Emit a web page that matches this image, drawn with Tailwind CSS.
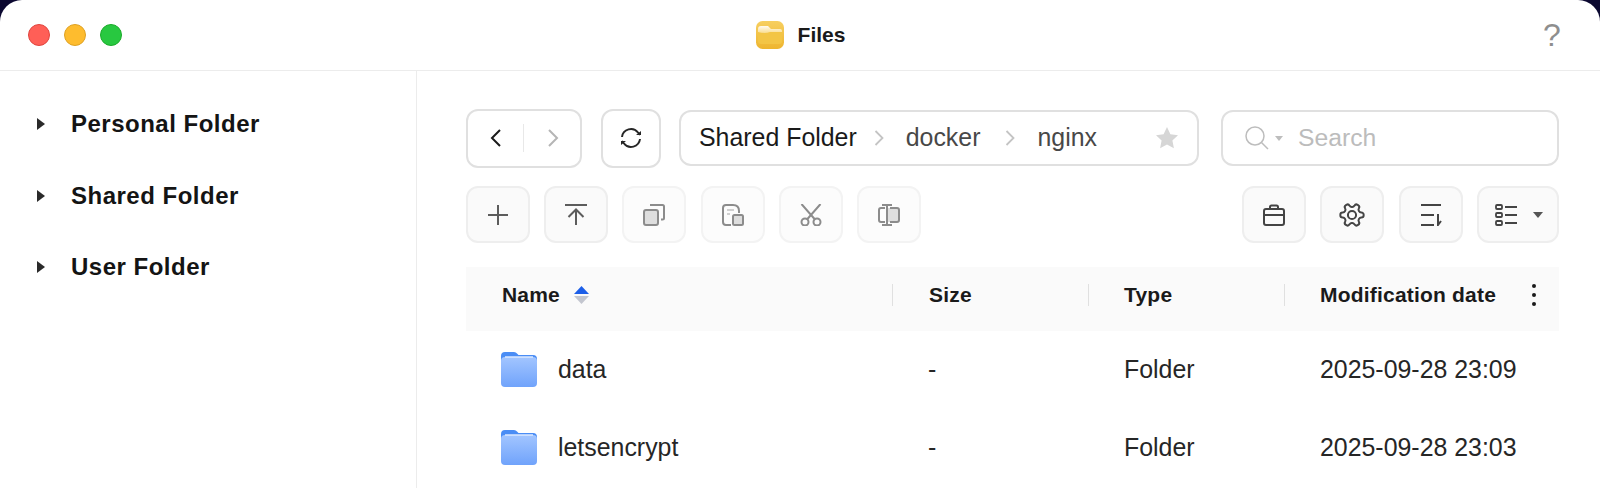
<!DOCTYPE html>
<html lang="en">
<head>
<meta charset="utf-8">
<title>Files</title>
<script src="https://cdn.jsdelivr.net/npm/@tailwindcss/browser@4"></script>
</head>
<body class="bg-[#0b0830] overflow-hidden font-['Liberation_Sans',Arial,sans-serif]">
<div class="w-[1600px] h-[488px] bg-white rounded-t-[22px] flex flex-col overflow-hidden">
  <!-- title bar -->
  <header class="h-[71px] shrink-0 border-b border-[#ececec] grid grid-cols-[1fr_auto_1fr] items-center pl-[28px] pr-[38px]">
    <div class="flex items-center gap-[14px]">
      <span class="w-[22px] h-[22px] rounded-full bg-[#ff5f57] border border-[#e0443e]"></span>
      <span class="w-[22px] h-[22px] rounded-full bg-[#febc2e] border border-[#dea123]"></span>
      <span class="w-[22px] h-[22px] rounded-full bg-[#28c840] border border-[#1aab29]"></span>
    </div>
    <div class="flex items-center gap-[13px] pl-[10px]">
      <svg width="30" height="30" viewBox="0 0 30 30">
        <defs>
          <linearGradient id="y" x1="0" y1="0" x2="0" y2="1"><stop offset="0" stop-color="#f7cf60"/><stop offset="1" stop-color="#eeb52f"/></linearGradient>
          <linearGradient id="p" x1="0" y1="0" x2="0" y2="1"><stop offset="0" stop-color="#fffaf0"/><stop offset="1" stop-color="#f8d676"/></linearGradient>
        </defs>
        <rect x="1" y="1" width="28" height="28" rx="6.500" fill="url(#y)"/>
        <path d="M3 9q0-3 3-3h7l3 3h9q2 0 2 2v4H3z" fill="url(#p)"/>
        <path d="M3 12q7 2 12 0h12v9q0 3-3 3H6q-3 0-3-3z" fill="#f3c545"/>
      </svg>
      <span class="text-[21px] font-bold text-[#1a1a1a]">Files</span>
    </div>
    <span class="justify-self-end text-[32px] leading-none text-[#8e8e8e] w-[24px] text-center -mr-[2px]">?</span>
  </header>

  <div class="flex-1 flex min-h-0">
    <!-- sidebar -->
    <aside class="w-[417px] shrink-0 border-r border-[#ececec] pt-[35px] pl-[37px]">
      <div class="h-[36px] mb-[35.5px] flex items-center gap-[26px]">
        <svg width="8" height="12" viewBox="0 0 8 12"><path d="M0 0l8 6-8 6z" fill="#2a2a2a"/></svg>
        <span class="text-[24px] font-bold tracking-[0.5px] text-[#141414]">Personal Folder</span>
      </div>
      <div class="h-[36px] mb-[35.5px] flex items-center gap-[26px]">
        <svg width="8" height="12" viewBox="0 0 8 12"><path d="M0 0l8 6-8 6z" fill="#2a2a2a"/></svg>
        <span class="text-[24px] font-bold tracking-[0.5px] text-[#141414]">Shared Folder</span>
      </div>
      <div class="h-[36px] flex items-center gap-[26px]">
        <svg width="8" height="12" viewBox="0 0 8 12"><path d="M0 0l8 6-8 6z" fill="#2a2a2a"/></svg>
        <span class="text-[24px] font-bold tracking-[0.5px] text-[#141414]">User Folder</span>
      </div>
    </aside>

    <!-- main -->
    <main class="flex-1 min-w-0 pl-[49px] pr-[41px] pt-[37px]">
      <!-- nav row -->
      <div class="flex items-center h-[60px]">
        <div class="w-[116px] h-[59px] rounded-[12px] border-2 border-[#e0e0e0] flex items-center">
          <div class="w-[55px] flex justify-center">
            <svg width="14" height="20" viewBox="0 0 14 20" fill="none" stroke="#1a1a1a" stroke-width="2"><path d="M11 2L3 10l8 8"/></svg>
          </div>
          <span class="w-px h-[28px] bg-[#e8e8e8]"></span>
          <div class="flex-1 flex justify-center pl-[2px]">
            <svg width="14" height="20" viewBox="0 0 14 20" fill="none" stroke="#b5b5b5" stroke-width="2"><path d="M3 2l8 8-8 8"/></svg>
          </div>
        </div>
        <div class="w-[60px] h-[59px] ml-[19px] rounded-[12px] border-2 border-[#e0e0e0] flex items-center justify-center">
          <svg width="24" height="24" viewBox="0 0 24 24" fill="none" stroke="#262626" stroke-width="2"><path d="M3 11A9 9 0 0 1 19 6.500L21 9"/><path d="M21 13A9 9 0 0 1 5 17.500L3 15"/><path d="M22 9h-5l5-4z" fill="#262626" stroke="none"/><path d="M2 15h5l-5 4z" fill="#262626" stroke="none"/></svg>
        </div>
        <div class="w-[520px] h-[56px] ml-[18px] rounded-[12px] border-2 border-[#e0e0e0] flex items-center pl-[18px] pr-[18px] text-[24.9px] text-[#484848]">
          <span class="text-[#1a1a1a]">Shared Folder</span>
          <svg class="ml-[14px] mr-[18px]" width="17" height="20" viewBox="0 0 14 20" fill="none" stroke="#c4c4c4" stroke-width="1.800"><path d="M3 3l7 7-7 7"/></svg>
          <span>docker</span>
          <svg class="ml-[22px] mr-[18px]" width="17" height="20" viewBox="0 0 14 20" fill="none" stroke="#c4c4c4" stroke-width="1.800"><path d="M3 3l7 7-7 7"/></svg>
          <span>nginx</span>
          <svg class="ml-auto" width="24" height="24" viewBox="0 0 24 24"><path d="M12 1l3.400 7.200 7.600 1-5.600 5.300 1.500 7.800L12 18.400 5.100 22.300l1.500-7.800L1 9.200l7.600-1z" fill="#d6d6d6"/></svg>
        </div>
        <div class="w-[338px] h-[56px] ml-[22px] rounded-[12px] border-2 border-[#e0e0e0] flex items-center pl-[22px] text-[24.7px] text-[#bcbcbc]">
          <svg width="24" height="24" viewBox="0 0 24 24" fill="none" stroke="#bdbdbd" stroke-width="1.500"><circle cx="10" cy="10" r="9"/><path d="M16.500 16.500l6.500 6.500"/></svg>
          <svg class="ml-[6px]" width="8" height="5" viewBox="0 0 10 6"><path d="M0 0h10L5 6z" fill="#bdbdbd"/></svg>
          <span class="ml-[15px]">Search</span>
        </div>
      </div>

      <!-- tool row -->
      <div class="flex items-center mt-[18px] h-[57px]">
        <button class="w-[64px] h-[57px] rounded-[12px] border-2 border-[#eeeeee] bg-[#fafafa] flex items-center justify-center">
          <svg width="20" height="20" viewBox="0 0 20 20" stroke="#5c5c5c" stroke-width="2" fill="none"><path d="M10 0v20M0 10h20"/></svg>
        </button>
        <button class="w-[64px] h-[57px] ml-[14px] rounded-[12px] border-2 border-[#eeeeee] bg-[#fafafa] flex items-center justify-center">
          <svg width="22" height="22" viewBox="0 0 22 22" stroke="#5c5c5c" stroke-width="2" fill="none"><path d="M0 1h22M11 21V6M3.500 13L11 5.500 18.500 13"/></svg>
        </button>
        <button class="w-[64px] h-[57px] ml-[14px] rounded-[12px] border-2 border-[#f3f3f3] bg-[#fcfcfc] flex items-center justify-center">
          <svg width="22" height="22" viewBox="0 0 22 22" stroke="#8c8c8c" stroke-width="2" fill="none"><rect x="1" y="6" width="14" height="15" rx="2" fill="#dedede"/><path d="M7 1h12.500q1.500 0 1.500 1.500V14q0 1.500-1.500 1.500H18"/></svg>
        </button>
        <button class="w-[64px] h-[57px] ml-[15px] rounded-[12px] border-2 border-[#f3f3f3] bg-[#fcfcfc] flex items-center justify-center">
          <svg width="22" height="22" viewBox="0 0 22 22" stroke="#8c8c8c" stroke-width="2" fill="none"><path d="M9 21H4q-3 0-3-3V4q0-3 3-3h7q6 0 6 6v2"/><rect x="11" y="11" width="10" height="10" rx="1.500" fill="#dedede"/><path d="M5 6h7M5 10h3" stroke="#d0d0d0"/></svg>
        </button>
        <button class="w-[64px] h-[57px] ml-[14px] rounded-[12px] border-2 border-[#f3f3f3] bg-[#fcfcfc] flex items-center justify-center">
          <svg width="22" height="22" viewBox="0 0 22 22" stroke="#8c8c8c" stroke-width="2" fill="none"><circle cx="5" cy="18" r="3.500"/><circle cx="17" cy="18" r="3.500"/><path d="M1.500 0L15 15.500M20.500 0L7 15.500"/></svg>
        </button>
        <button class="w-[64px] h-[57px] ml-[14px] rounded-[12px] border-2 border-[#f3f3f3] bg-[#fcfcfc] flex items-center justify-center">
          <svg width="22" height="22" viewBox="0 0 22 22" stroke="#8c8c8c" stroke-width="2" fill="none"><rect x="8" y="4" width="13" height="14" fill="#dedede" stroke="none"/><path d="M4 1h10M4 21h10M9 1v20M7 4H3q-2 0-2 2v10q0 2 2 2h4M12 4h7q2 0 2 2v10q0 2-2 2h-7"/></svg>
        </button>

        <button class="ml-auto w-[64px] h-[57px] rounded-[12px] border-2 border-[#eeeeee] bg-[#fafafa] flex items-center justify-center">
          <svg width="22" height="22" viewBox="0 0 22 22" stroke="#444" stroke-width="2" fill="none"><rect x="1" y="5" width="20" height="16" rx="2"/><path d="M1 11h20M7 5V3q0-1.500 1.500-1.500h5Q15 1.500 15 3v2"/></svg>
        </button>
        <button class="w-[64px] h-[57px] ml-[14px] rounded-[12px] border-2 border-[#eeeeee] bg-[#fafafa] flex items-center justify-center">
          <svg class="rotate-90" width="28" height="28" viewBox="0 0 24 24" stroke="#444" stroke-width="1.700" fill="none"><circle cx="12" cy="12" r="3.500"/><path d="M12.220 2h-.44a2 2 0 0 0-2 2v.18a2 2 0 0 1-1 1.730l-.43.250a2 2 0 0 1-2 0l-.15-.08a2 2 0 0 0-2.730.730l-.22.380a2 2 0 0 0 .730 2.730l.150.100a2 2 0 0 1 1 1.720v.510a2 2 0 0 1-1 1.740l-.15.090a2 2 0 0 0-.730 2.730l.220.380a2 2 0 0 0 2.730.730l.150-.08a2 2 0 0 1 2 0l.430.250a2 2 0 0 1 1 1.730V20a2 2 0 0 0 2 2h.440a2 2 0 0 0 2-2v-.18a2 2 0 0 1 1-1.730l.430-.25a2 2 0 0 1 2 0l.150.080a2 2 0 0 0 2.730-.730l.220-.390a2 2 0 0 0-.730-2.730l-.150-.08a2 2 0 0 1-1-1.740v-.5a2 2 0 0 1 1-1.740l.150-.09a2 2 0 0 0 .730-2.730l-.22-.38a2 2 0 0 0-2.730-.73l-.15.080a2 2 0 0 1-2 0l-.43-.25a2 2 0 0 1-1-1.730V4a2 2 0 0 0-2-2z"/></svg>
        </button>
        <button class="w-[64px] h-[57px] ml-[15px] rounded-[12px] border-2 border-[#eeeeee] bg-[#fafafa] flex items-center justify-center">
          <svg width="21" height="22" viewBox="0 0 21 22" stroke="#444" stroke-width="2" fill="none"><path d="M0 1h20M0 11h13M0 21h13M17 10v11l3-4"/></svg>
        </button>
        <button class="w-[82px] h-[57px] ml-[14px] rounded-[12px] border-2 border-[#eeeeee] bg-[#fafafa] flex items-center pl-[16px]">
          <svg width="22" height="22" viewBox="0 0 22 22" stroke="#444" stroke-width="1.800" fill="none"><rect x="1" y="1" width="6" height="4" rx="1"/><rect x="1" y="9" width="6" height="4" rx="1"/><rect x="1" y="17" width="6" height="4" rx="1"/><path d="M10 3h12M10 11h12M10 19h12"/></svg>
          <svg class="ml-[16px]" width="10" height="6" viewBox="0 0 10 6"><path d="M0 0h10L5 6z" fill="#555"/></svg>
        </button>
      </div>

      <!-- table -->
      <div class="mt-[24px]">
        <div class="grid grid-cols-[426px_196px_196px_1fr] h-[64px] pb-[8px] bg-[#fafafa] items-center text-[21px] tracking-[0.2px] font-bold text-[#1a1a1a]">
          <div class="pl-[36px] flex items-center gap-[14px]">
            <span>Name</span>
            <svg width="15" height="18" viewBox="0 0 15 18"><path d="M0 8L7.500 0 15 8z" fill="#1d5fe8"/><path d="M0 10h15L7.500 18z" fill="#c3c6cf"/></svg>
          </div>
          <div class="h-[22px] border-l border-[#e0e0e0] pl-[36px] flex items-center">Size</div>
          <div class="h-[22px] border-l border-[#e0e0e0] pl-[35px] flex items-center">Type</div>
          <div class="h-[22px] border-l border-[#e0e0e0] pl-[35px] flex items-center justify-between pr-[23px]">
            <span>Modification date</span>
            <span class="flex flex-col gap-[5px]"><i class="block w-1 h-1 rounded-full bg-[#1a1a1a]"></i><i class="block w-1 h-1 rounded-full bg-[#1a1a1a]"></i><i class="block w-1 h-1 rounded-full bg-[#1a1a1a]"></i></span>
          </div>
        </div>
        <div class="grid grid-cols-[426px_196px_196px_1fr] h-[78px] items-center text-[24.9px] text-[#262626]">
          <div class="pl-[35px] flex items-center gap-[21px]">
            <svg width="36" height="35" viewBox="0 0 36 35"><defs><linearGradient id="f" x1="0" y1="0" x2="0" y2="1"><stop offset="0" stop-color="#a2c5ff"/><stop offset="1" stop-color="#70a3fb"/></linearGradient></defs><path d="M0 4q0-4 4-4h9q2 0 3 1.500L17.500 3H32q4 0 4 4v8H0z" fill="#4a8df5"/><rect y="5" width="36" height="30" rx="4" fill="url(#f)"/><path d="M4 5h28" stroke="#dbe8ff" stroke-width="1.500"/></svg>
            <span>data</span>
          </div>
          <div class="pl-[36px]">-</div>
          <div class="pl-[36px]">Folder</div>
          <div class="pl-[36px]">2025-09-28 23:09</div>
        </div>
        <div class="grid grid-cols-[426px_196px_196px_1fr] h-[78px] items-center text-[24.9px] text-[#262626]">
          <div class="pl-[35px] flex items-center gap-[21px]">
            <svg width="36" height="35" viewBox="0 0 36 35"><path d="M0 4q0-4 4-4h9q2 0 3 1.500L17.500 3H32q4 0 4 4v8H0z" fill="#4a8df5"/><rect y="5" width="36" height="30" rx="4" fill="url(#f)"/><path d="M4 5h28" stroke="#dbe8ff" stroke-width="1.500"/></svg>
            <span>letsencrypt</span>
          </div>
          <div class="pl-[36px]">-</div>
          <div class="pl-[36px]">Folder</div>
          <div class="pl-[36px]">2025-09-28 23:03</div>
        </div>
      </div>
    </main>
  </div>
</div>
</body>
</html>
